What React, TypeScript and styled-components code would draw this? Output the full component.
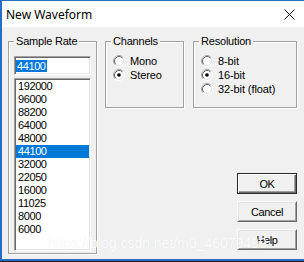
import styled, { createGlobalStyle } from "styled-components";

const rates = [
  "192000",
  "96000",
  "88200",
  "64000",
  "48000",
  "44100",
  "32000",
  "22050",
  "16000",
  "11025",
  "8000",
  "6000",
];

const GlobalStyle = createGlobalStyle`
  html, body {
    margin: 0;
    padding: 0;
    background: #1f1f1f;
    overflow: hidden;
  }
  body {
    font-family: "Liberation Sans", Arial, sans-serif;
    color: #000;
  }
`;

const RadioMark = ({ checked }: { checked?: boolean }) => (
  <S.RadioSvg width="12" height="12" viewBox="0 0 12 12">
    <circle cx="6" cy="6" r="5.5" fill="none" stroke="#fff" />
    <path d="M2.11 9.89 A5.5 5.5 0 0 1 9.89 2.11" fill="none" stroke="#a0a0a0" />
    <circle cx="6" cy="6" r="4.5" fill="#fff" stroke="#e3e3e3" />
    <path d="M2.82 9.18 A4.5 4.5 0 0 1 9.18 2.82" fill="none" stroke="#696969" />
    {checked && <circle cx="6" cy="6" r="1.8" fill="#000" />}
  </S.RadioSvg>
);

const Radio = ({ label, checked }: { label: string; checked?: boolean }) => (
  <S.RadioRow>
    <RadioMark checked={checked} />
    <span>{label}</span>
  </S.RadioRow>
);

export default function App() {
  return (
    <>
      <GlobalStyle />
      <S.Window>
        <S.TitleBar>
          <S.Title>New Waveform</S.Title>
          <svg width="11" height="11" viewBox="0 0 11 11">
            <path d="M0.5 0.5 L10.5 10.5 M10.5 0.5 L0.5 10.5" stroke="#111" strokeWidth="1" />
          </svg>
        </S.TitleBar>
        <S.Body>
          <S.Group $w={89}>
            <S.Legend>Sample Rate</S.Legend>
            <S.RateContent>
              <S.Field>
                <S.Selected>44100</S.Selected>
              </S.Field>
              <S.List>
                {rates.map((r) => (
                  <S.Item key={r} $active={r === "44100"}>
                    {r}
                  </S.Item>
                ))}
              </S.List>
            </S.RateContent>
          </S.Group>
          <S.RightCol>
            <S.GroupRow>
              <S.Group $w={79} $h={73}>
                <S.Legend>Channels</S.Legend>
                <S.RadioContent>
                  <Radio label="Mono" />
                  <Radio label="Stereo" checked />
                </S.RadioContent>
              </S.Group>
              <S.Group $w={104} $h={73}>
                <S.Legend>Resolution</S.Legend>
                <S.RadioContent>
                  <Radio label="8-bit" />
                  <Radio label="16-bit" checked />
                  <Radio label="32-bit (float)" />
                </S.RadioContent>
              </S.Group>
            </S.GroupRow>
            <S.Buttons>
              <S.Button $default>OK</S.Button>
              <S.Button>Cancel</S.Button>
              <S.Button>Help</S.Button>
            </S.Buttons>
          </S.RightCol>
        </S.Body>
        <S.Watermark>https://blog.csdn.net/m0_46079499</S.Watermark>
      </S.Window>
    </>
  );
}

const S = {
  Window: styled.div`
    position: relative;
    width: 304px;
    height: 261px;
    box-sizing: border-box;
    display: flex;
    flex-direction: column;
    border-top: 1px solid #2b6cc4;
    border-left: 2px solid #2b6cc4;
    border-bottom: 2px solid #2b6cc4;
    background: #f0f0f0;
  `,
  TitleBar: styled.div`
    height: 26px;
    flex: none;
    display: flex;
    align-items: center;
    justify-content: space-between;
    padding: 0 9px 0 4px;
    background: #fff;
  `,
  Title: styled.span`
    font-family: "Noto Sans", "Liberation Sans", sans-serif;
    font-size: 12px;
  `,
  Body: styled.div`
    flex: 1;
    display: flex;
    gap: 8px;
    padding: 8px 7px 0 6px;
  `,
  Group: styled.fieldset<{ $w: number; $h?: number }>`
    margin: 0;
    padding: 0;
    min-width: 0;
    box-sizing: border-box;
    width: ${(p) => p.$w}px;
    height: ${(p) => (p.$h ? `${p.$h}px` : "auto")};
    align-self: flex-start;
    border: 1px solid #a0a0a0;
    box-shadow: inset 1px 1px 0 #fff, 1px 1px 0 #fff;
  `,
  Legend: styled.legend`
    margin-left: 5px;
    padding: 0 2px;
    font-size: 11px;
    line-height: 13px;
    letter-spacing: -0.2px;
    background: #f0f0f0;
  `,
  RateContent: styled.div`
    display: flex;
    flex-direction: column;
    gap: 3px;
    padding: 8px 5px 2px;
  `,
  Field: styled.div`
    width: 77px;
    height: 19px;
    box-sizing: border-box;
    display: flex;
    align-items: center;
    padding-left: 1px;
    background: #fff;
    border: 1px solid;
    border-color: #a0a0a0 #fff #fff #a0a0a0;
    box-shadow: inset 1px 1px 0 #696969, inset -1px -1px 0 #e3e3e3;
  `,
  Selected: styled.span`
    padding: 0 1px;
    font-size: 11px;
    line-height: 12px;
    letter-spacing: -0.4px;
    color: #fff;
    background: #0078d7;
  `,
  List: styled.div`
    width: 77px;
    height: 173px;
    box-sizing: border-box;
    padding: 1px 1px;
    background: #fff;
    border: 1px solid;
    border-color: #a0a0a0 #fff #fff #a0a0a0;
    box-shadow: inset 1px 1px 0 #696969, inset -1px -1px 0 #e3e3e3;
  `,
  Item: styled.div<{ $active?: boolean }>`
    height: 13px;
    padding-left: 2px;
    font-size: 11px;
    line-height: 13px;
    letter-spacing: -0.4px;
    color: ${(p) => (p.$active ? "#fff" : "#000")};
    background: ${(p) => (p.$active ? "#0078d7" : "transparent")};
  `,
  RightCol: styled.div`
    flex: 1;
    display: flex;
    flex-direction: column;
  `,
  GroupRow: styled.div`
    display: flex;
    gap: 9px;
  `,
  RadioContent: styled.div`
    display: flex;
    flex-direction: column;
    padding: 6px 0 0 7px;
  `,
  RadioRow: styled.div`
    height: 14px;
    display: flex;
    align-items: center;
    gap: 5px;
    font-size: 11px;
    letter-spacing: -0.1px;
  `,
  RadioSvg: styled.svg`
    flex: none;
    display: block;
  `,
  Buttons: styled.div`
    margin-top: 65px;
    align-self: flex-end;
    display: flex;
    flex-direction: column;
    gap: 7px;
  `,
  Button: styled.button<{ $default?: boolean }>`
    width: 60px;
    height: 21px;
    box-sizing: border-box;
    margin: 0;
    padding: 0;
    font-family: "Liberation Sans", Arial, sans-serif;
    font-size: 11px;
    letter-spacing: -0.4px;
    color: #000;
    background: #f0f0f0;
    border: 1px solid;
    border-color: ${(p) =>
      p.$default ? "#2a2a2a" : "#fff #696969 #696969 #fff"};
    box-shadow: ${(p) =>
      p.$default
        ? "inset 1px 1px 0 #fff, inset -1px -1px 0 #696969, inset -2px -2px 0 #a0a0a0"
        : "inset 1px 1px 0 #e3e3e3, inset -1px -1px 0 #a0a0a0"};
  `,
  Watermark: styled.div`
    position: absolute;
    left: 46px;
    top: 234px;
    font-size: 14px;
    color: rgba(255, 255, 255, 0.92);
    text-shadow: 0 0 1px rgba(0, 0, 0, 0.08);
    white-space: nowrap;
    pointer-events: none;
  `,
};
